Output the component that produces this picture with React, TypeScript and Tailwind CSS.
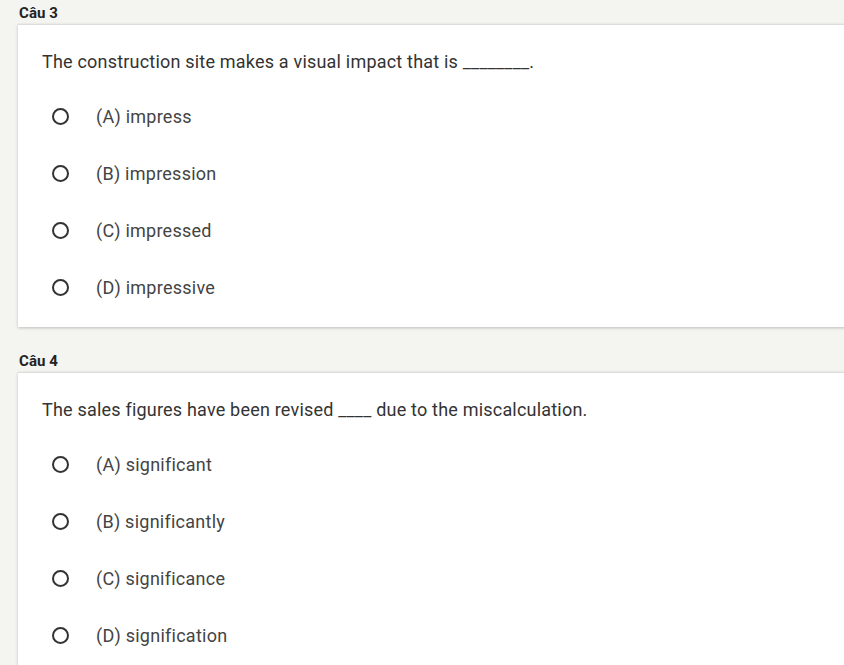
import React from "react";

const questions = [
  {
    label: "Câu 3",
    text: "The construction site makes a visual impact that is ________.",
    options: ["(A) impress", "(B) impression", "(C) impressed", "(D) impressive"],
  },
  {
    label: "Câu 4",
    text: "The sales figures have been revised ____ due to the miscalculation.",
    options: ["(A) significant", "(B) significantly", "(C) significance", "(D) signification"],
  },
];

export default function App() {
  return (
    <div
      className="w-[844px] h-[665px] overflow-hidden bg-[#f4f4f0] pl-[18px]"
      style={{ fontFamily: "Roboto, 'Liberation Sans', sans-serif" }}
    >
      {questions.map((q) => (
        <div key={q.label} className="mb-[21px]">
          <div className="h-[24px] pl-[1px] pt-[3px] text-[15px] font-bold leading-[20px] tracking-[0.1px] text-[#222]">
            {q.label}
          </div>
          <div className="w-[860px] bg-white pl-[24px] pt-[25px] pb-[11px] shadow-[0_1px_3px_rgba(0,0,0,0.22)] border-t border-[#ddd]">
            <div className="mb-[14px] text-[18px] leading-[24px] tracking-[0.2px] text-[#333]">{q.text}</div>
            {q.options.map((o) => (
              <div key={o} className="flex h-[57px] items-center">
                <span className="ml-[10px] mr-[27px] h-[17px] w-[17px] rounded-full border-2 border-[#333]" />
                <span className="text-[18px] leading-[24px] tracking-[0.25px] text-[#444]">{o}</span>
              </div>
            ))}
          </div>
        </div>
      ))}
    </div>
  );
}
